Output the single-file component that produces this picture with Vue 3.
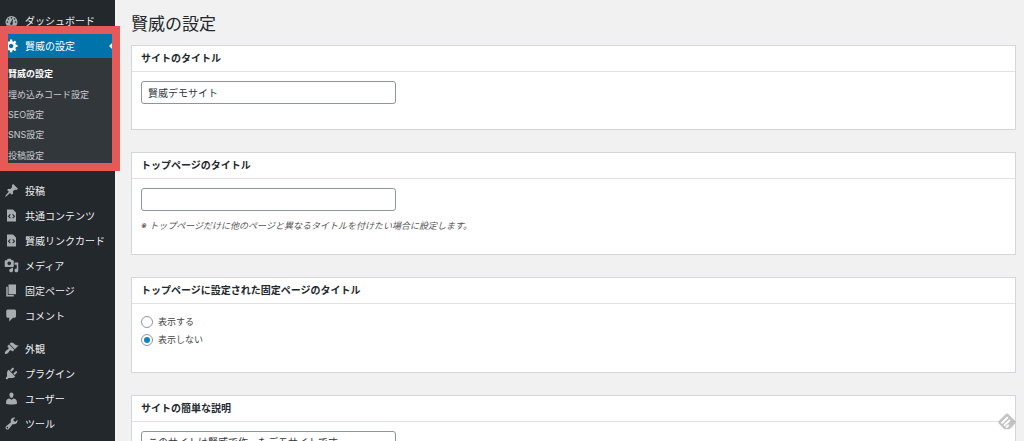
<script setup>
import { ref } from 'vue'

const icons = {
  gear: 'M18 12h-2.18c-.17.7-.44 1.35-.81 1.93l1.54 1.54-2.1 2.1-1.54-1.54c-.58.36-1.23.63-1.91.79V19H8v-2.18c-.68-.16-1.33-.43-1.91-.79l-1.54 1.54-2.12-2.12 1.54-1.54c-.36-.58-.63-1.23-.79-1.91H1V9.03h2.17c.16-.7.44-1.35.8-1.94L2.43 5.55l2.1-2.1 1.54 1.54c.58-.37 1.24-.64 1.93-.81V2h3v2.18c.68.16 1.33.43 1.91.79l1.54-1.54 2.12 2.12-1.54 1.54c.36.59.64 1.24.8 1.94H18V12zm-8.5 1.5c1.66 0 3-1.34 3-3s-1.34-3-3-3-3 1.34-3 3 1.34 3 3 3z',
  pin: 'M10.44 3.02l1.82-1.82 6.36 6.35-1.83 1.82c-1.05-.68-2.48-.57-3.41.36l-.75.75c-.92.93-1.04 2.35-.35 3.41l-1.83 1.82-2.41-2.41-2.8 2.79c-.42.42-3.38 2.71-3.8 2.29s1.86-3.39 2.28-3.81l2.79-2.79L4.1 9.36l1.83-1.82c1.05.69 2.48.57 3.4-.36l.75-.75c.93-.92 1.05-2.35.36-3.41z',
  code: 'M12 2l4 4v12H4V2h8zM9 13l-2-2 2-2-1-1-3 3 3 3zm3 1l3-3-3-3-1 1 2 2-2 2z',
  media: 'M13 11V4c0-.55-.45-1-1-1h-1.67L9 1H5L3.67 3H2c-.55 0-1 .45-1 1v7c0 .55.45 1 1 1h10c.55 0 1-.45 1-1zM7 4.5c1.38 0 2.5 1.12 2.5 2.5S8.38 9.5 7 9.5 4.5 8.38 4.5 7 5.62 4.5 7 4.5zM14 6h5v10.5c0 1.38-1.12 2.5-2.5 2.5S14 17.88 14 16.5s1.12-2.5 2.5-2.5c.17 0 .34.02.5.05V9h-3V6zm-4 8.05V13h2v3.5c0 1.38-1.12 2.5-2.5 2.5S7 17.88 7 16.5 8.12 14 9.5 14c.17 0 .34.02.5.05z',
  page: 'M6 15V2h10v13H6zm-1 1h8v2H3V5h2v11z',
  comment: 'M5 2h9c1.1 0 2 .9 2 2v7c0 1.1-.9 2-2 2h-2l-5 5v-5H5c-1.1 0-2-.9-2-2V4c0-1.1.9-2 2-2z',
  brush: 'M14.48 11.06L7.41 3.99l1.5-1.5c.5-.56 2.3-.47 3.51.32 1.21.8 1.43 1.28 2.91 2.1 1.18.64 2.45 1.26 4.45.85zm-.71.71L6.7 4.7 4.93 6.47c-.39.39-.39 1.02 0 1.41l1.06 1.06c.39.39.39 1.03 0 1.42-.6.6-1.43 1.11-2.21 1.69-.35.26-.7.53-1.01.84C1.43 14.23.4 16.08 1.4 17.07c.99 1 2.84-.03 4.18-1.36.31-.31.58-.66.85-1.02.57-.78 1.08-1.61 1.69-2.21.39-.39 1.02-.39 1.41 0l1.06 1.06c.39.39 1.02.39 1.41 0z',
  plug: 'M13.11 4.36L9.87 7.6 8 5.73l3.24-3.24c.35-.34 1.05-.2 1.56.32.52.51.66 1.21.31 1.55zm-8 1.77l.91-1.12 9.01 9.01-1.19.84c-.71.71-2.63 1.16-3.82 1.16H6.14L4.9 17.26c-.59.59-1.54.59-2.12 0-.59-.58-.59-1.53 0-2.12l1.24-1.24v-3.88c0-1.13.4-3.19 1.09-3.89zm7.26 3.97l3.24-3.24c.34-.35 1.04-.21 1.55.31.52.51.66 1.21.31 1.55l-3.24 3.25z',
  user: 'M10 9.25c-2.27 0-2.73-3.44-2.73-3.44C7 4.02 7.82 2 9.97 2c2.16 0 2.98 2.02 2.71 3.81 0 0-.41 3.44-2.68 3.44zm0 2.57L12.72 10c2.39 0 4.52 2.33 4.52 4.53v2.49s-3.65 1.13-7.24 1.13c-3.65 0-7.24-1.13-7.24-1.13v-2.49c0-2.25 1.94-4.48 4.47-4.48z',
  wrench: 'M16.68 9.77c-1.34 1.34-3.3 1.67-4.95.99l-5.41 6.52c-.99.99-2.59.99-3.58 0s-.99-2.59 0-3.57l6.52-5.42c-.68-1.65-.35-3.61.99-4.95 1.28-1.28 3.12-1.62 4.72-1.06l-2.89 2.89 2.82 2.82 2.86-2.87c.53 1.58.18 3.39-1.08 4.65zM3.81 16.21c.4.39 1.04.39 1.43 0 .4-.4.4-1.04 0-1.43-.39-.4-1.03-.4-1.43 0-.39.39-.39 1.03 0 1.43z',
}

const submenu = ['賢威の設定', '埋め込みコード設定', 'SEO設定', 'SNS設定', '投稿設定']

const groups = [
  [
    { icon: 'pin', label: '投稿' },
    { icon: 'code', label: '共通コンテンツ' },
    { icon: 'code', label: '賢威リンクカード' },
    { icon: 'media', label: 'メディア' },
    { icon: 'page', label: '固定ページ' },
    { icon: 'comment', label: 'コメント' },
  ],
  [
    { icon: 'brush', label: '外観' },
    { icon: 'plug', label: 'プラグイン' },
    { icon: 'user', label: 'ユーザー' },
    { icon: 'wrench', label: 'ツール' },
  ],
]

const siteTitle = ref('賢威デモサイト')
const topTitle = ref('')
const showTitle = ref('no')
const description = ref('このサイトは賢威で作ったデモサイトです。')
</script>

<template>
  <div class="admin">
    <nav class="sidebar">
      <a class="item" href="#">
        <svg class="icon" viewBox="0 0 20 20">
          <path d="M3.8 17h12.4c1.1-1.4 1.8-3.1 1.8-5a8 8 0 0 0-16 0c0 1.9.7 3.6 1.8 5z" />
          <g class="dial">
            <circle cx="10" cy="6.4" r="1.1" />
            <circle cx="6" cy="8" r="1.1" />
            <circle cx="14" cy="8" r="1.1" />
            <circle cx="4.5" cy="12" r="1.1" />
            <circle cx="15.5" cy="12" r="1.1" />
            <path d="M11.8 7.5L11.6 13.5a1.8 1.8 0 1 1-2.600-1z" />
          </g>
        </svg>
        ダッシュボード
      </a>
      <div class="open">
        <a class="item current" href="#">
          <svg class="icon" viewBox="0 0 20 20"><path :d="icons.gear" /></svg>
          賢威の設定
        </a>
        <ul class="submenu">
          <li v-for="(s, i) in submenu" :key="s">
            <a href="#" :class="{ active: i === 0 }">{{ s }}</a>
          </li>
        </ul>
        <div class="highlight"></div>
      </div>
      <div v-for="(group, g) in groups" :key="g" class="group">
        <a v-for="item in group" :key="item.label" class="item" href="#">
          <svg class="icon" viewBox="0 0 20 20"><path :d="icons[item.icon]" /></svg>
          {{ item.label }}
        </a>
      </div>
    </nav>

    <main class="content">
      <h1>賢威の設定</h1>

      <section class="card">
        <h2><label for="site-title">サイトのタイトル</label></h2>
        <div class="body">
          <input id="site-title" v-model="siteTitle" class="field" type="text" />
        </div>
      </section>

      <section class="card">
        <h2><label for="top-title">トップページのタイトル</label></h2>
        <div class="body">
          <input id="top-title" v-model="topTitle" class="field" type="text" />
          <p class="note">※ トップページだけに他のページと異なるタイトルを付けたい場合に設定します。</p>
        </div>
      </section>

      <section class="card">
        <h2 id="show-heading">トップページに設定された固定ページのタイトル</h2>
        <div class="body">
          <div class="radios" role="radiogroup" aria-labelledby="show-heading">
            <label><input v-model="showTitle" type="radio" name="show" value="yes" />表示する</label>
            <label><input v-model="showTitle" type="radio" name="show" value="no" />表示しない</label>
          </div>
        </div>
      </section>

      <section class="card">
        <h2><label for="site-desc">サイトの簡単な説明</label></h2>
        <div class="body">
          <textarea id="site-desc" v-model="description" class="field" rows="4"></textarea>
        </div>
      </section>
    </main>

    <button class="feed" type="button" aria-label="feedly">
      <svg viewBox="0 0 18 18">
        <path class="feed-bg" d="M7.6 1.200Q9 0 10.400 1.200L17.200 8Q18.400 9.300 17.200 10.500L12.500 15.500Q11.800 16.200 10.800 16.200H7.200Q6.200 16.200 5.500 15.500L.8 10.500Q-.4 9.300.8 8z" />
        <path class="feed-line" d="M4.200 9.700L9.300 4.600M6.600 12L11.400 7.600M8.600 14L10.200 12.600" />
      </svg>
    </button>
  </div>
</template>

<style>
html,
body {
  background: #f1f1f1;
}
</style>

<style scoped>
.admin {
  display: flex;
  height: 100vh;
  overflow: hidden;
  font-family: "Inter", "Noto Sans CJK JP", sans-serif;
  font-size: 10px;
  color: #444;
}

.sidebar {
  flex: none;
  width: 115px;
  padding-top: 8px;
  box-sizing: border-box;
  background: #23282d;
}

.item {
  display: flex;
  align-items: center;
  gap: 6px;
  height: 25px;
  padding-left: 4px;
  color: #eee;
  text-decoration: none;
  white-space: nowrap;
}

.icon {
  width: 15px;
  height: 15px;
  fill: #a7acb1;
}

.dial {
  fill: #23282d;
}

.open {
  position: relative;
}

.current {
  position: relative;
  background: #0073aa;
  color: #fff;
}

.current .icon {
  fill: #fff;
}

.current::after {
  content: "";
  position: absolute;
  right: 0;
  border: 6px solid transparent;
  border-left: 0;
  border-right-color: #f1f1f1;
}

.submenu {
  display: grid;
  grid-auto-rows: 1fr;
  min-height: 102px;
  margin: 0;
  padding: 6px 0 4px 8px;
  list-style: none;
  background: #32373c;
}

.submenu li {
  display: flex;
  align-items: center;
}

.submenu a {
  font-size: 9px;
  line-height: 16px;
  color: #c8cbce;
  text-decoration: none;
  white-space: nowrap;
}

.submenu .active {
  color: #fff;
  font-weight: 700;
}

.highlight {
  position: absolute;
  inset: -7px -5px -1px 0;
  border: 8px solid #e55957;
  pointer-events: none;
}

.group {
  margin-top: 8px;
}

.content {
  flex: 1;
  min-width: 0;
  padding: 10px 8px 0 16px;
}

h1 {
  margin: 0 0 7px;
  font-size: 17px;
  line-height: 28px;
  font-weight: 400;
  color: #23282d;
}

.card {
  margin-bottom: 22px;
  border: 1px solid #d3d6da;
  background: #fff;
}

h2 {
  margin: 0;
  padding: 0 9px;
  border-bottom: 1px solid #dfe1e5;
  font-size: 10px;
  line-height: 25px;
  font-weight: 700;
  color: #23282d;
}

.body {
  padding: 9px 9px 20px;
}

.field {
  display: block;
  width: 255px;
  max-width: 100%;
  height: 23px;
  margin: 0 0 5px;
  padding: 0 6px;
  box-sizing: border-box;
  border: 1px solid #8b959e;
  border-radius: 3px;
  background: #fff;
  font: inherit;
  color: #32373c;
}

textarea.field {
  height: 80px;
  padding-top: 2px;
  line-height: 16px;
  resize: none;
}

.note {
  margin: 7px 0 0;
  font-size: 9px;
  line-height: 16px;
  font-style: italic;
  color: #555;
}

.radios {
  display: grid;
  gap: 1px;
  margin-bottom: 4px;
}

.radios label {
  display: flex;
  align-items: center;
  gap: 5px;
  font-size: 9px;
  line-height: 17px;
}

.radios input {
  appearance: none;
  display: grid;
  place-items: center;
  width: 12px;
  height: 12px;
  margin: 0;
  border: 1px solid #8b959e;
  border-radius: 50%;
  background: #fff;
}

.radios input:checked::before {
  content: "";
  width: 6px;
  height: 6px;
  border-radius: 50%;
  background: #1582be;
}

.feed {
  position: fixed;
  right: 8px;
  bottom: 10px;
  width: 18px;
  height: 18px;
  padding: 0;
  border: 0;
  background: none;
  opacity: 0.8;
}

.feed svg {
  display: block;
}

.feed-bg {
  fill: #b5b5b5;
}

.feed-line {
  fill: none;
  stroke: #fff;
  stroke-width: 2;
  stroke-linecap: round;
}
</style>
